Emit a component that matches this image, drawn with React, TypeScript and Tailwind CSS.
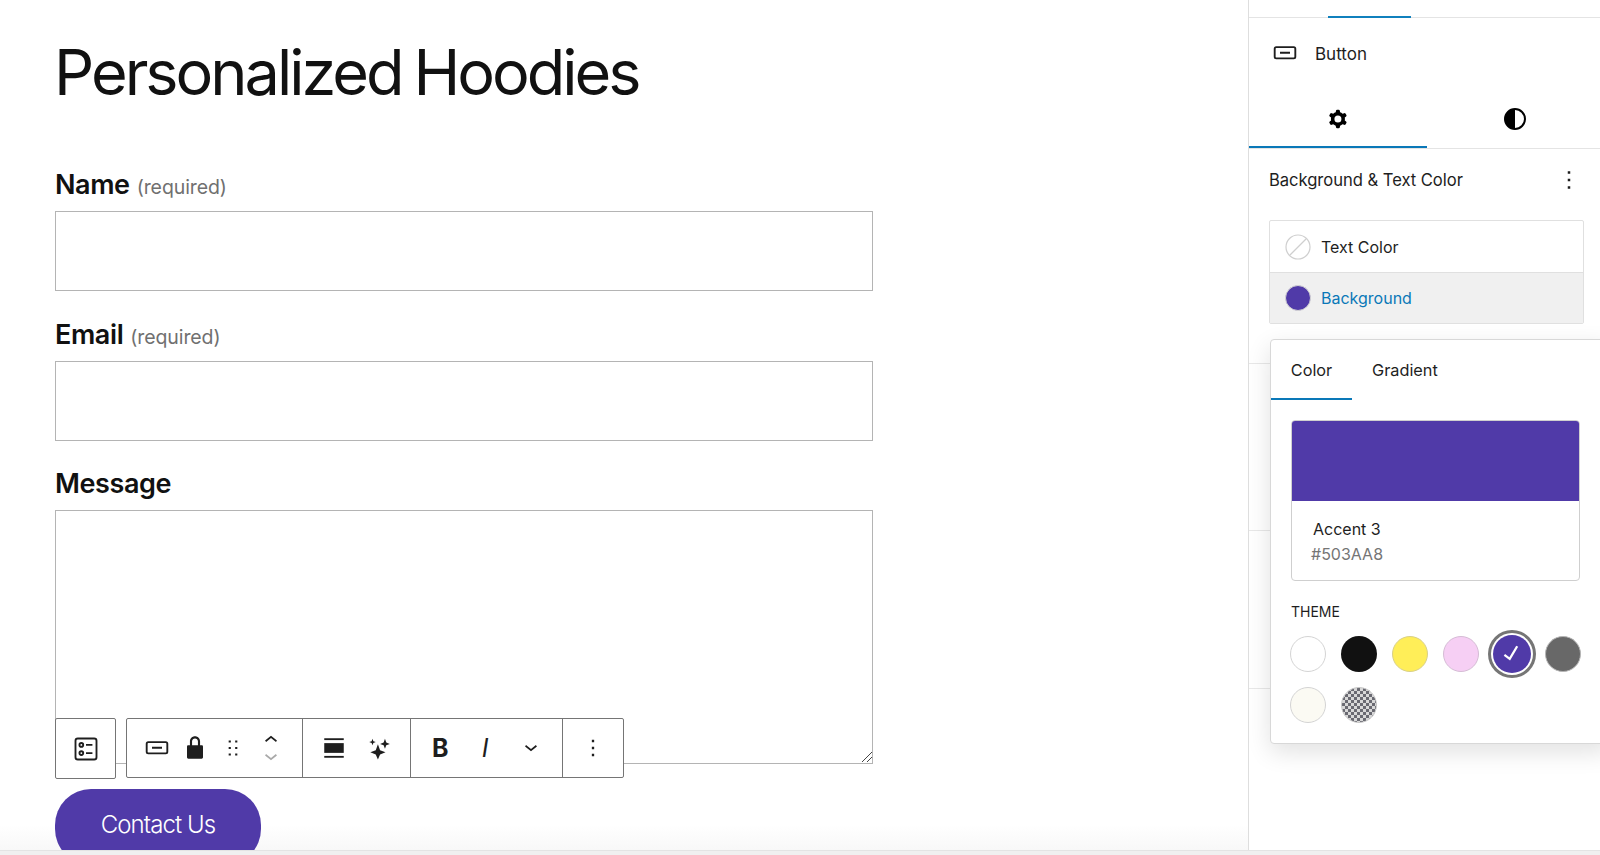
import React from "react";

const Wp = ({ d, size = 24, className = "", evenodd = false }: { d: string; size?: number; className?: string; evenodd?: boolean }) => (
  <svg width={size} height={size} viewBox="0 0 24 24" className={className} fill="currentColor">
    <path d={d} fillRule={evenodd ? "evenodd" : "nonzero"} clipRule={evenodd ? "evenodd" : "nonzero"} />
  </svg>
);

const BUTTON = "M8 12.5h8V11H8v1.5Z M19 6.5H5a2 2 0 0 0-2 2V15a2 2 0 0 0 2 2h14a2 2 0 0 0 2-2V8.5a2 2 0 0 0-2-2ZM5 8h14a.5.5 0 0 1 .5.5V15a.5.5 0 0 1-.5.5H5a.5.5 0 0 1-.5-.5V8.5A.5.5 0 0 1 5 8Z";
const LOCK = "M17 10h-1.2V7c0-2.1-1.7-3.8-3.8-3.8-2.1 0-3.8 1.7-3.8 3.8v3H7c-.6 0-1 .4-1 1v8c0 .6.4 1 1 1h10c.6 0 1-.4 1-1v-8c0-.6-.4-1-1-1zm-2.8 0H9.8V7c0-1.2 1-2.2 2.2-2.2s2.2 1 2.2 2.2v3z";
const DRAG = "M8 7h2V5H8v2zm0 6h2v-2H8v2zm0 6h2v-2H8v2zm6-14v2h2V5h-2zm0 8h2v-2h-2v2zm0 6h2v-2h-2v2z";
const MORE = "M13 19h-2v-2h2v2zm0-6h-2v-2h2v2zm0-6h-2V5h2v2z";
const CHEV = "M17.5 9.6 12 14l-5.5-4.4.9-1.2L12 12l4.5-3.6 1 1.2z";
const GEAR = "M10.289 4.836A1 1 0 0 1 11.275 4h1.306a1 1 0 0 1 .987.836l.244 1.466c.787.26 1.503.679 2.108 1.218l1.393-.522a1 1 0 0 1 1.216.437l.653 1.13a1 1 0 0 1-.23 1.273l-1.148.944a6.025 6.025 0 0 1 0 2.435l1.149.946a1 1 0 0 1 .23 1.272l-.653 1.13a1 1 0 0 1-1.216.437l-1.394-.522c-.605.54-1.32.958-2.108 1.218l-.244 1.466a1 1 0 0 1-.987.836h-1.306a1 1 0 0 1-.986-.836l-.244-1.466a5.995 5.995 0 0 1-2.108-1.218l-1.394.522a1 1 0 0 1-1.217-.436l-.653-1.131a1 1 0 0 1 .23-1.272l1.149-.946a6.026 6.026 0 0 1 0-2.435l-1.148-.944a1 1 0 0 1-.23-1.272l.653-1.131a1 1 0 0 1 1.217-.437l1.393.522a5.994 5.994 0 0 1 2.108-1.218l.244-1.466ZM14.929 12a3 3 0 1 1-6 0 3 3 0 0 1 6 0Z";

const FormIcon = () => (
  <svg width="28" height="28" viewBox="0 0 24 24" fill="none" stroke="#1e1e1e" strokeWidth="1.6">
    <rect x="3" y="3" width="18" height="18" rx="2" />
    <circle cx="8" cy="8.500" r="1.600" />
    <circle cx="8" cy="15.500" r="1.600" />
    <path d="M12 8.500h5.500M12 15.500h5.500" />
  </svg>
);

const AlignIcon = () => (
  <svg width="26" height="26" viewBox="0 0 24 24" fill="#1e1e1e">
    <rect x="3" y="3" width="18" height="1.700" />
    <rect x="3" y="7.500" width="18" height="9" />
    <rect x="3" y="19.300" width="18" height="1.700" />
  </svg>
);

const Sparkles = () => (
  <svg width="26" height="26" viewBox="0 0 24 24" fill="#1e1e1e">
    <path d="M11 10.500 13 16l5 2-5 2-2 4.500L9 20l-5-2 5-2 2-5.500Z" transform="translate(0 -2)" />
    <path d="M17.500 3.500 18.700 7l3.300 1.200-3.300 1.200-1.200 3.400-1.200-3.400L13 8.200 16.300 7l1.200-3.500Z" />
    <path d="M6 3.500 6.800 5.700 9 6.500 6.800 7.300 6 9.500 5.200 7.300 3 6.500 5.200 5.700 6 3.500Z" />
  </svg>
);

const Tool = ({ children, className = "" }: { children: React.ReactNode; className?: string }) => (
  <div className={`flex items-center justify-center ${className}`}>{children}</div>
);

const Field = ({ label, req, h, mt }: { label: string; req?: boolean; h: string; mt: string }) => (
  <div className={mt}>
    <div className="h-[45px] pb-[8px] flex items-center gap-[7px] leading-none">
      <span className="text-[27px] font-semibold text-[#111] tracking-[-0.4px]">{label}</span>
      {req && <span className="text-[19.500px] text-[#707070] mt-[6px] tracking-[-0.1px]">(required)</span>}
    </div>
    <div className={`${h} w-[818px] border border-[#b4b4b4] bg-white`} />
  </div>
);

const Swatch = ({ c }: { c: string }) => <div className={`w-[36px] h-[36px] rounded-full ${c}`} />;

export default function App() {
  return (
    <div className="h-[855px] w-[1600px] overflow-hidden flex flex-col bg-white text-[#1e1e1e] font-['Inter','Liberation_Sans',sans-serif]">
      <div className="h-[850px] flex">
        <main className="relative w-[1248px] pl-[55px] overflow-hidden bg-gradient-to-b from-white from-[97%] to-[#f8f8f8]">
          <h1 className="mt-[40px] -ml-[1px] h-[64px] leading-[64px] text-[63px] font-normal text-[#111] tracking-[-3px] [word-spacing:-3px] whitespace-nowrap">Personalized Hoodies</h1>
          <Field label="Name" req h="h-[80px]" mt="mt-[62px]" />
          <Field label="Email" req h="h-[80px]" mt="mt-[25px]" />
          <Field label="Message" h="h-[254px]" mt="mt-[24px]" />
          <svg width="12" height="12" viewBox="0 0 12 12" className="absolute left-[861px] top-[751px]" stroke="#444" strokeWidth="1" fill="none">
            <path d="M11 1 1 11M11 6 6 11" />
          </svg>
          <div className="mt-[25px] h-[76px] w-[206px] rounded-[36px] bg-[#503aa8] flex items-center justify-center pb-[5px] text-white text-[24px] font-light tracking-[-0.9px]">
            Contact Us
          </div>
          <div className="absolute left-[55px] top-[718px] flex gap-[10px] h-[61px]">
            <Tool className="w-[61px] h-[61px] bg-white border border-[#757575] rounded-[2px]"><FormIcon /></Tool>
            <div className="flex h-[60px] bg-white border border-[#757575] rounded-[2px] text-[#1e1e1e]">
              <div className="w-[176px] flex items-center pl-[15px] border-r border-[#757575]">
                <Wp d={BUTTON} size={30} />
                <Wp d={LOCK} size={32} className="ml-[7px]" />
                <Wp d={DRAG} size={26} className="ml-[9px]" />
                <div className="ml-[12px] flex flex-col items-center">
                  <Wp d={CHEV} size={26} className="rotate-180 -mb-[3px]" />
                  <Wp d={CHEV} size={26} className="text-[#a9a9a9] -mt-[3px]" />
                </div>
              </div>
              <div className="w-[108px] flex items-center pl-[18px] gap-[19px] border-r border-[#757575]">
                <AlignIcon />
                <Sparkles />
              </div>
              <div className="w-[152px] flex items-center pl-[21px] border-r border-[#757575]">
                <span className="w-[16px] text-[25px] font-bold leading-none text-center">B</span>
                <span className="ml-[32px] w-[10px] text-[25px] italic font-normal leading-none text-center">I</span>
                <Wp d={CHEV} size={26} className="ml-[28px] mt-[2px]" />
              </div>
              <Tool className="w-[60px]"><Wp d={MORE} size={28} /></Tool>
            </div>
          </div>
        </main>

        <aside className="relative w-[352px] border-l border-[#dedede] bg-white text-[16px] overflow-hidden">
          <div className="h-[18px] border-b border-[#e4e4e4] pl-[79px]">
            <div className="h-[18px] w-[83px] border-b-2 border-[#1080bd]" />
          </div>
          <div className="h-[70px] flex items-center pl-[21px] gap-[15px]">
            <Wp d={BUTTON} size={30} />
            <span className="text-[17px] pt-[3px]">Button</span>
          </div>
          <div className="h-[61px] flex border-b border-[#e4e4e4]">
            <div className="w-[178px] h-[60px] pt-[3px] flex items-center justify-center border-b-2 border-[#0a78b8]"><Wp d={GEAR} size={28} className="text-black" evenodd /></div>
            <div className="flex-1 pt-[2px] pl-[3px] flex items-center justify-center">
              <svg width="24" height="24" viewBox="0 0 24 24">
                <circle cx="12" cy="12" r="10" fill="none" stroke="#000" strokeWidth="2" />
                <path d="M12 2a10 10 0 0 0 0 20Z" fill="#000" />
              </svg>
            </div>
          </div>
          <div className="h-[62px] flex items-center pl-[20px] pr-[16px] justify-between">
            <span className="text-[16.600px] tracking-[-0.04px]">Background &amp; Text Color</span>
            <Wp d={MORE} size={30} />
          </div>
          <div className="mt-[9px] ml-[20px] w-[315px] border border-[#e0e0e0] rounded-[2px]">
            <div className="h-[52px] flex items-center pl-[15px] gap-[10px] border-b border-[#e0e0e0]">
              <svg width="26" height="26" viewBox="0 0 26 26" fill="none" stroke="#cfcfcf" strokeWidth="1.200"><circle cx="13" cy="13" r="12" /><path d="M5 21 21 5" /></svg>
              <span>Text Color</span>
            </div>
            <div className="h-[50px] flex items-center pl-[15px] gap-[10px] bg-[#f0f0f0] text-[#0a78b8]">
              <div className="w-[26px] h-[26px] rounded-full bg-[#503aa8] border border-[#d4d4d4]" />
              <span>Background</span>
            </div>
          </div>
          <div className="absolute left-0 top-[363px] w-[25px] border-t border-[#e8e8e8]" />
          <div className="absolute left-0 top-[530px] w-[25px] border-t border-[#e8e8e8]" />
          <div className="absolute left-0 top-[688px] w-[25px] border-t border-[#e8e8e8]" />
          <div className="absolute left-[21px] top-[339px] w-[340px] h-[405px] bg-white border border-[#d8d8d8] rounded-[4px] shadow-[0_8px_24px_rgba(0,0,0,0.12)]">
            <div className="h-[60px] flex text-[16.300px]">
              <div className="w-[81px] pt-[3px] flex items-center justify-center border-b-2 border-[#0a78b8]">Color</div>
              <div className="ml-[20px] pt-[3px] flex items-center border-b-2 border-transparent">Gradient</div>
            </div>
            <div className="mt-[20px] ml-[20px] w-[289px] h-[161px] border border-[#cfcfcf] rounded-[4px] overflow-hidden">
              <div className="h-[80px] bg-[#503aa8]" />
              <div className="pl-[21px] pt-[16px] text-[16px] leading-[25px]">
                <div>Accent 3</div>
                <div className="-ml-[2px] text-[#757575]">#503AA8</div>
              </div>
            </div>
            <div className="mt-[22px] ml-[20px] text-[14px] leading-[18px] uppercase">Theme</div>
            <div className="mt-[15px] ml-[11px] w-[306px] grid grid-cols-6 gap-y-[15px] justify-items-center">
              <Swatch c="bg-white border border-[#d4d4d4]" />
              <Swatch c="bg-[#111111]" />
              <Swatch c="bg-[#ffee58] border border-[#d8d08a]" />
              <Swatch c="bg-[#f6cff4] border border-[#d5bcd5]" />
              <div className="w-[38px] h-[38px] -my-[1px] rounded-full bg-[#503aa8] flex items-center justify-center text-white shadow-[0_0_0_2px_#fff,0_0_0_5px_#757575]">
                <svg width="32" height="32" viewBox="0 0 24 24" fill="none" stroke="currentColor" strokeWidth="1.700"><path d="M6.300 12.600 10.300 15.600 15.900 6.200" /></svg>
              </div>
              <Swatch c="bg-[#686868] border border-[#b5b5b5]" />
              <Swatch c="bg-[#fbfaf3] border border-[#d4d4d4]" />
              <Swatch c="border border-[#c4c4c4] bg-[repeating-conic-gradient(#6a6a72_0_25%,#d8d8d8_0_50%)] bg-[length:6px_6px]" />
            </div>
          </div>
        </aside>
      </div>
      <div className="h-[5px] bg-[#f0f0f0] border-t border-[#e4e4e4]" />
    </div>
  );
}
